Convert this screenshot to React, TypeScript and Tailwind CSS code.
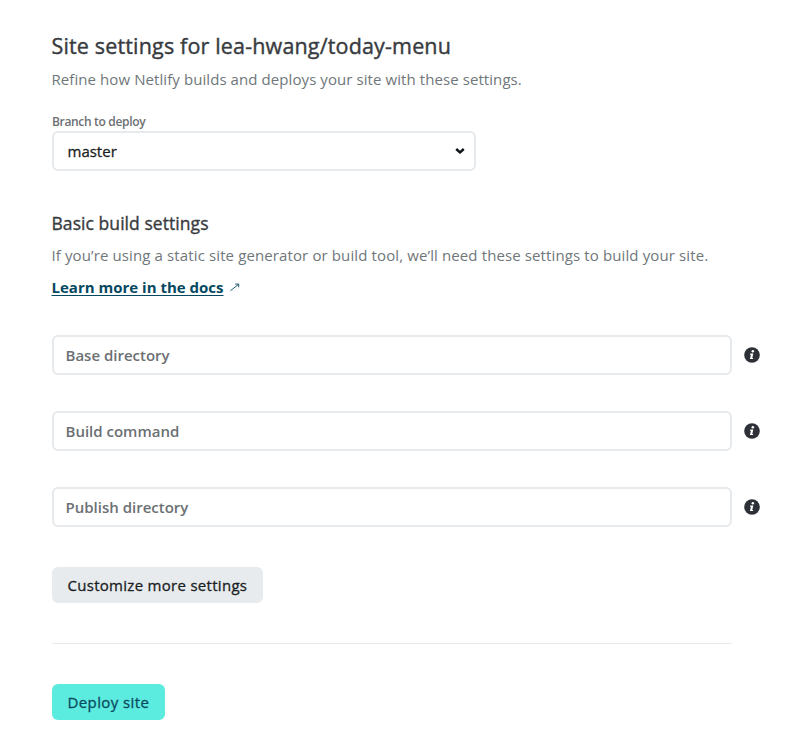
import React from "react";

function InfoIcon() {
  return (
    <svg viewBox="0 0 16 16" className="h-4 w-4 shrink-0" aria-hidden="true">
      <circle cx="8" cy="8" r="7.8" fill="#2d3036" />
      <circle cx="8.8" cy="4.3" r="1.25" fill="#fff" />
      <path d="M6.2 6.6h3.1L8.3 10.9h.9l-.3 1.2H5.9l1-4.3h-.9z" fill="#fff" />
    </svg>
  );
}

function Field({ label }: { label: string }) {
  return (
    <div className="flex items-center gap-3">
      <div className="flex h-10 w-[680px] items-center rounded-md border-2 border-[#e6eaed] px-[11.5px]">
        <span className="text-[15px] leading-6 font-semibold text-[#6b7073]">{label}</span>
      </div>
      <InfoIcon />
    </div>
  );
}

export default function App() {
  return (
    <main className="h-[742px] w-[808px] overflow-hidden bg-white pt-8 pl-[52px] font-['Open_Sans','Noto_Sans',sans-serif] whitespace-nowrap">
      <h1 className="-ml-[0.5px] h-7 text-[21.5px] leading-7 tracking-[0.16px] text-[#383b40] [-webkit-text-stroke:0.4px_#383b40]">
        Site settings for lea-hwang/today-menu
      </h1>
      <p className="-ml-[0.5px] mt-[7px] h-6 text-[15px] leading-6 tracking-[0.08px] text-[#6f777a]">
        Refine how Netlify builds and deploys your site with these settings.
      </p>
      <div className="mt-[22px] h-[18px] text-[12px] leading-[18px] font-semibold tracking-[-0.33px] text-[#6b7073]">
        Branch to deploy
      </div>
      <div className="flex h-10 w-[424px] items-center justify-between rounded-md border-2 border-[#e6eaed] pr-[9px] pl-[13.5px]">
        <span className="text-[15px] leading-6 text-[#1b1e22] [-webkit-text-stroke:0.3px_#1b1e22]">master</span>
        <svg viewBox="0 0 10 8" className="h-2 w-2.5" fill="none" stroke="#0e1419" strokeWidth="2.5">
          <path d="M1.2 2L5 5.4 8.8 2" />
        </svg>
      </div>
      <h2 className="-ml-[0.5px] mt-10 h-6 text-[17.5px] leading-6 tracking-[0.06px] text-[#383b40] [-webkit-text-stroke:0.35px_#383b40]">
        Basic build settings
      </h2>
      <p className="-ml-[0.5px] mt-1 h-8 text-[15px] leading-8 tracking-[0.118px] text-[#6f777a]">
        If you’re using a static site generator or build tool, we’ll need these settings to build your site.
      </p>
      <div className="-ml-[0.5px] flex h-8 items-center gap-[7px] text-[#054861]">
        <a className="text-[15px] leading-6 font-bold underline decoration-1 underline-offset-2">Learn more in the docs</a>
        <svg viewBox="0 0 10 10" className="h-2.5 w-2.5" fill="none" stroke="currentColor" strokeWidth="0.9">
          <path d="M.5 8.7l8-6.4M5.2 2.1h3.5v3.2" />
        </svg>
      </div>
      <div className="mt-8 flex flex-col gap-9">
        <Field label="Base directory" />
        <Field label="Build command" />
        <Field label="Publish directory" />
      </div>
      <button className="mt-10 flex h-9 w-[211px] items-center rounded-md bg-[#e7ebee] pl-[15.5px] text-[15px] leading-6 tracking-[0.29px] text-[#1b1e22] [-webkit-text-stroke:0.3px_#1b1e22]">
        Customize more settings
      </button>
      <div className="mt-10 h-px w-[680px] bg-[#e6e8ea]" />
      <button className="mt-10 flex h-9 w-[113px] items-center rounded-md bg-[#5cebdf] pl-[15.5px] text-[15px] leading-6 tracking-[0.4px] text-[#0b4b5f] [-webkit-text-stroke:0.3px_#0b4b5f]">
        Deploy site
      </button>
    </main>
  );
}
